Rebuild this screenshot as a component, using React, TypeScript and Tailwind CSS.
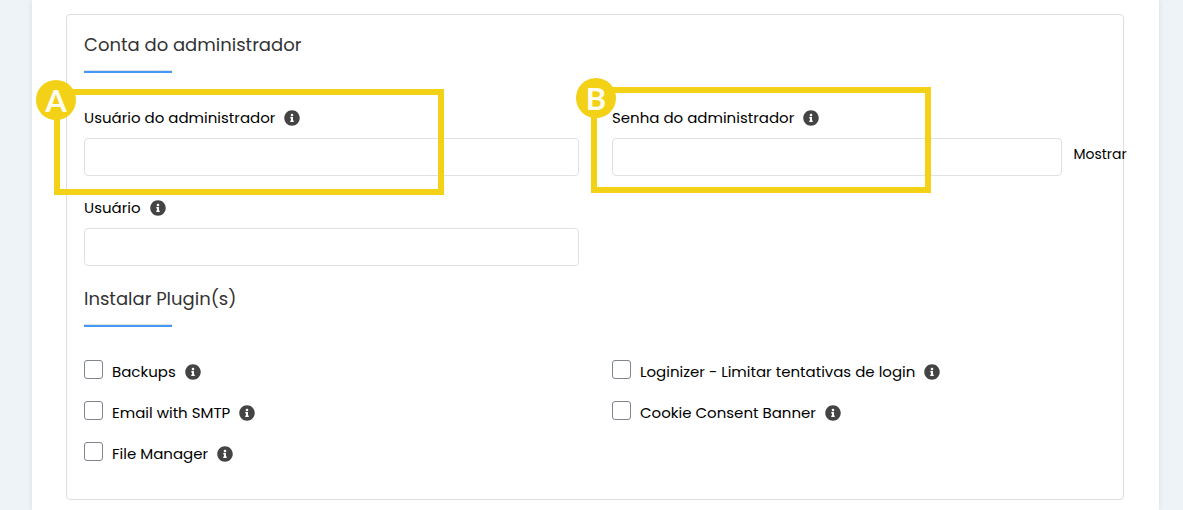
import { useState } from "react";
import type { ReactNode } from "react";
import { FaInfoCircle } from "react-icons/fa";

function Info() {
  return <FaInfoCircle aria-hidden="true" className="size-4 shrink-0 text-[#444]" />;
}

function SectionTitle({ children }: { children: ReactNode }) {
  return (
    <div>
      <h2 className="text-lg leading-6 text-[#333]">{children}</h2>
      <div className="mt-[13px] h-[3px] w-[88px] border-t border-[#e2e2e2] bg-[#4398f8]" />
    </div>
  );
}

function FieldLabel({ id, children }: { id: string; children: ReactNode }) {
  return (
    <label htmlFor={id} className="mb-2 flex h-6 items-center gap-[9px] leading-6">
      {children}
      <Info />
    </label>
  );
}

const inputStyle = "h-[38px] rounded border border-[#e1e1e1] bg-white px-3 outline-none focus:border-[#4398f8]";

function Plugin({ id, name }: { id: string; name: string }) {
  return (
    <div className="flex h-6 items-start">
      <input
        id={id}
        type="checkbox"
        className="mr-[9px] size-[19px] shrink-0 appearance-none rounded-[3px] border border-[#80848c] bg-white checked:bg-[#4398f8]"
      />
      <label htmlFor={id} className="flex items-center gap-[9px] leading-6">
        {name}
        <Info />
      </label>
    </div>
  );
}

function Marker({ children, className }: { children: ReactNode; className: string }) {
  return (
    <div className={`pointer-events-none absolute h-[106px] border-6 border-[#f2d117] ${className}`}>
      <span className="absolute -top-[15px] flex size-10 items-center justify-center rounded-full bg-[#f2d117] font-['Lato',sans-serif] text-[31px] leading-none font-bold text-[#fffdf0]">
        {children}
      </span>
    </div>
  );
}

export default function App() {
  const [visible, setVisible] = useState(false);

  return (
    <div className="bg-[#eef3f8] pr-6 pl-8 font-['Poppins','Inter',sans-serif] text-[15px] text-black">
      <main className="bg-white pt-3.5 pr-[35px] pb-2.5 pl-[34px] shadow-[0_0_6px_rgba(0,0,0,0.09)]">
        <form className="rounded border border-[#dedede] pt-[18px] pr-4 pb-[33px] pl-[17px]">
          <SectionTitle>Conta do administrador</SectionTitle>

          <div className="mt-[33px] grid grid-cols-2 gap-x-[33px] gap-y-5">
            <div className="relative flex flex-col">
              <FieldLabel id="admin-user">Usuário do administrador</FieldLabel>
              <input id="admin-user" type="text" className={inputStyle} />
              <Marker className="-top-[17px] -left-[30px] w-[390px] *:-left-6">A</Marker>
            </div>

            <div className="relative">
              <FieldLabel id="admin-password">Senha do administrador</FieldLabel>
              <div className="flex items-center gap-[11px]">
                <input
                  id="admin-password"
                  type={visible ? "text" : "password"}
                  className={`${inputStyle} w-[91%] shrink-0`}
                />
                <button type="button" onClick={() => setVisible(!visible)} className="pb-1.5 text-sm">
                  Mostrar
                </button>
              </div>
              <Marker className="-top-[19px] -left-[21px] w-[340px] *:-left-[21px]">B</Marker>
            </div>

            <div className="flex flex-col">
              <FieldLabel id="user">Usuário</FieldLabel>
              <input id="user" type="text" className={inputStyle} />
            </div>
          </div>

          <div className="mt-[21px]">
            <SectionTitle>Instalar Plugin(s)</SectionTitle>
          </div>

          <div className="mt-[33px] grid grid-cols-2 gap-x-[33px] gap-y-[17px]">
            <Plugin id="backups" name="Backups" />
            <Plugin id="loginizer" name="Loginizer - Limitar tentativas de login" />
            <Plugin id="smtp" name="Email with SMTP" />
            <Plugin id="cookies" name="Cookie Consent Banner" />
            <Plugin id="files" name="File Manager" />
          </div>
        </form>
      </main>
    </div>
  );
}
